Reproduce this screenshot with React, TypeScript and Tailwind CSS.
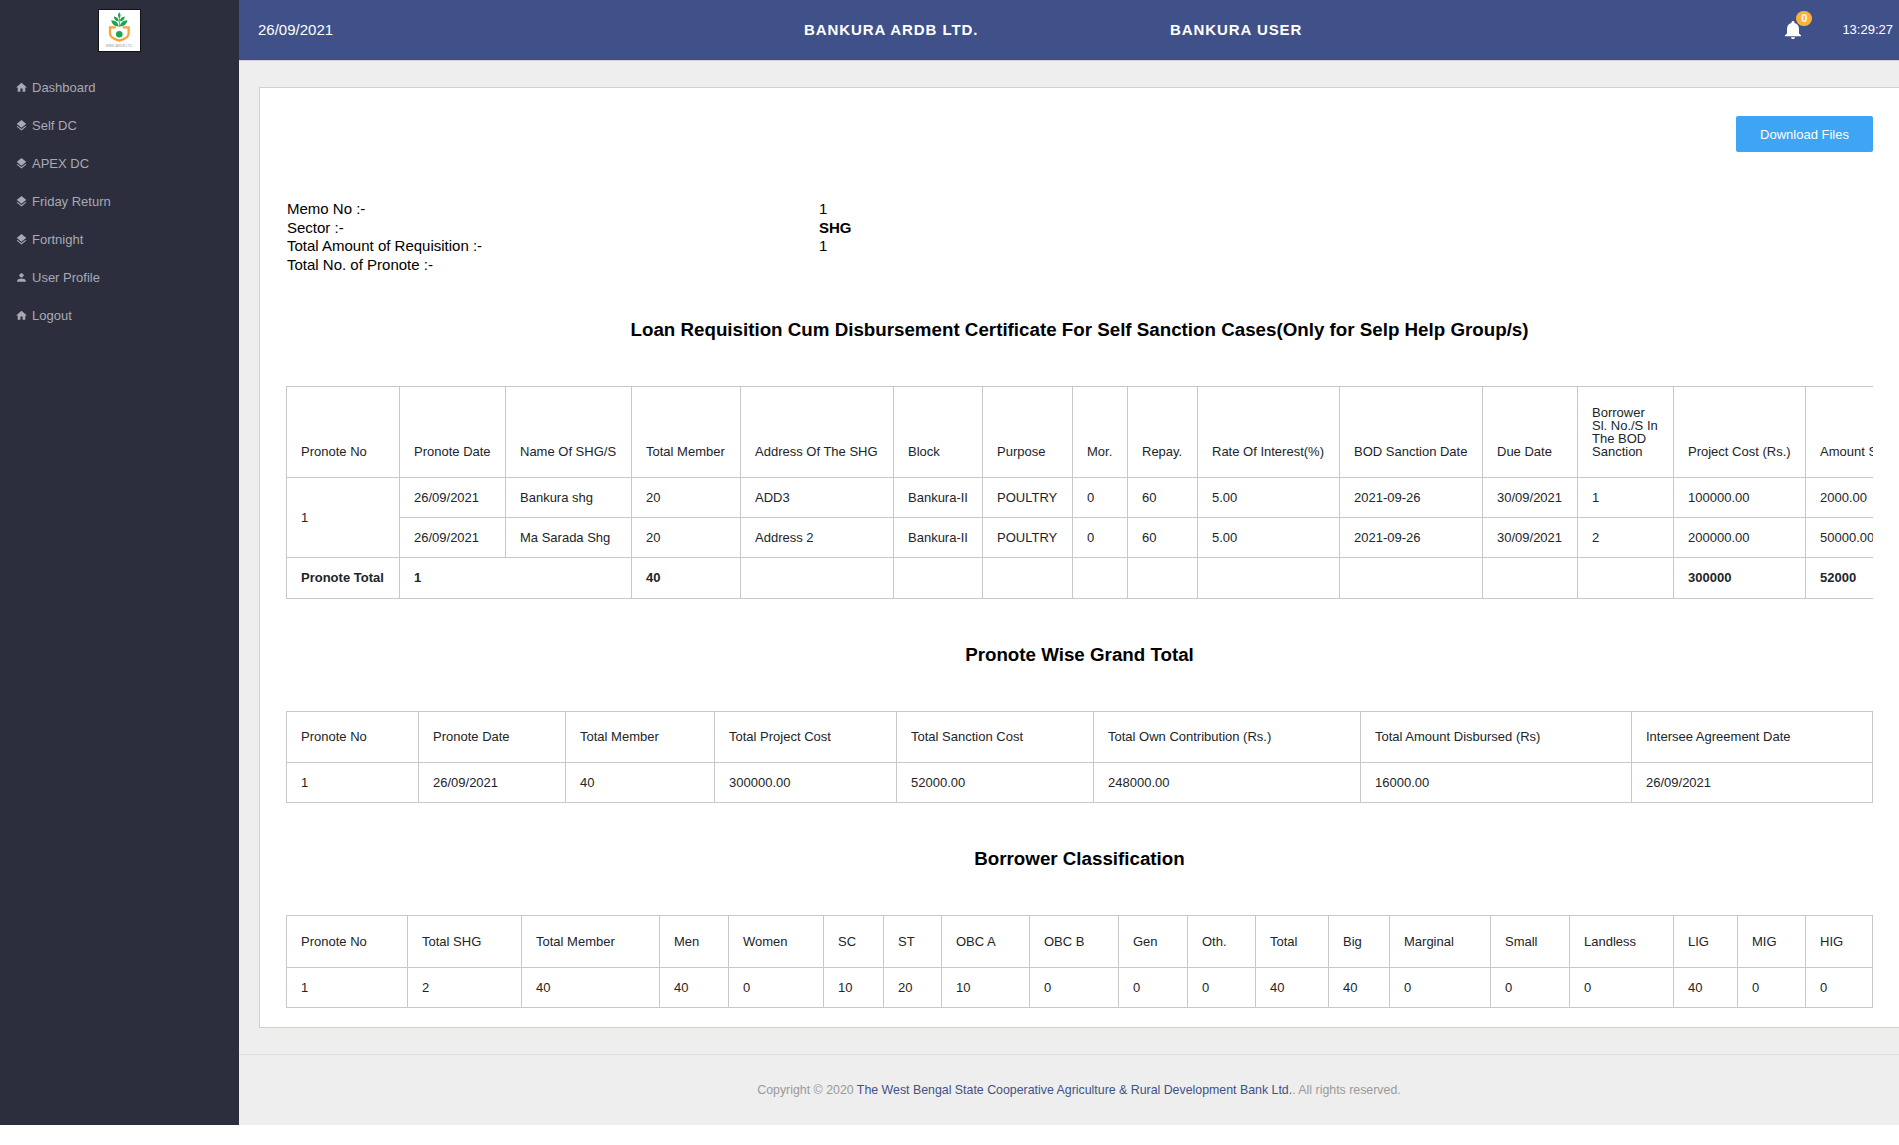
import React from "react";
import { MdHome, MdLayers, MdPerson } from "react-icons/md";

const nav = [
  { label: "Dashboard", icon: "home" },
  { label: "Self DC", icon: "layers" },
  { label: "APEX DC", icon: "layers" },
  { label: "Friday Return", icon: "layers" },
  { label: "Fortnight", icon: "layers" },
  { label: "User Profile", icon: "user" },
  { label: "Logout", icon: "home" },
];

const loanCols = [113, 106, 126, 109, 153, 89, 90, 55, 70, 142, 143, 95, 96, 132, 170];
const loanHead: React.ReactNode[] = [
  "Pronote No", "Pronote Date", "Name Of SHG/S", "Total Member", "Address Of The SHG", "Block", "Purpose", "Mor.", "Repay.",
  "Rate Of Interest(%)", "BOD Sanction Date", "Due Date",
  <>Borrower<br />Sl. No./S In<br />The BOD<br />Sanction</>,
  "Project Cost (Rs.)", "Amount Sanction (Rs.)",
];
const loanRows = [
  ["26/09/2021", "Bankura shg", "20", "ADD3", "Bankura-II", "POULTRY", "0", "60", "5.00", "2021-09-26", "30/09/2021", "1", "100000.00", "2000.00"],
  ["26/09/2021", "Ma Sarada Shg", "20", "Address 2", "Bankura-II", "POULTRY", "0", "60", "5.00", "2021-09-26", "30/09/2021", "2", "200000.00", "50000.00"],
];
const loanTotals = ["40", "", "", "", "", "", "", "", "", "", "300000", "52000"];

const grandCols = [132, 147, 149, 182, 197, 267, 271, 241];
const grandHead = ["Pronote No", "Pronote Date", "Total Member", "Total Project Cost", "Total Sanction Cost", "Total Own Contribution (Rs.)", "Total Amount Disbursed (Rs)", "Intersee Agreement Date"];
const grandRow = ["1", "26/09/2021", "40", "300000.00", "52000.00", "248000.00", "16000.00", "26/09/2021"];

const classCols = [121, 114, 138, 69, 95, 60, 58, 88, 89, 69, 68, 73, 61, 101, 79, 104, 64, 68, 67];
const classHead = ["Pronote No", "Total SHG", "Total Member", "Men", "Women", "SC", "ST", "OBC A", "OBC B", "Gen", "Oth.", "Total", "Big", "Marginal", "Small", "Landless", "LIG", "MIG", "HIG"];
const classRow = ["1", "2", "40", "40", "0", "10", "20", "10", "0", "0", "0", "40", "40", "0", "0", "0", "40", "0", "0"];

const cell = "border-r border-b border-[#c8c8c8] pl-[14px] text-left font-normal whitespace-nowrap";
const tableStyle = "table-fixed border-separate border-spacing-0 border-t border-l border-[#c8c8c8] text-[13px] leading-[13px] text-[#212529]";

function Cols({ widths }: { widths: number[] }) {
  return (
    <colgroup>
      {widths.map((w, i) => (
        <col key={i} style={{ width: w }} />
      ))}
    </colgroup>
  );
}

function Heading({ children }: { children: React.ReactNode }) {
  return <h3 className="flex h-28 items-center justify-center text-[18.75px] leading-6 font-bold text-black">{children}</h3>;
}

function SimpleTable({ widths, head, row, headClass }: { widths: number[]; head: string[]; row: string[]; headClass: string }) {
  return (
    <table className={tableStyle} style={{ width: widths.reduce((a, b) => a + b, 1) }}>
      <Cols widths={widths} />
      <thead>
        <tr className={headClass}>
          {head.map((h) => (
            <th key={h} className={cell + " pb-px"}>{h}</th>
          ))}
        </tr>
      </thead>
      <tbody>
        <tr className="h-10">
          {row.map((v, i) => (
            <td key={i} className={cell}>{v}</td>
          ))}
        </tr>
      </tbody>
    </table>
  );
}

function LoanTable() {
  return (
    <div className="overflow-hidden">
      <table className={tableStyle} style={{ width: loanCols.reduce((a, b) => a + b, 1) }}>
        <Cols widths={loanCols} />
        <thead>
          <tr className="h-[91px]">
            {loanHead.map((h, i) => (
              <th key={i} className={cell + " pb-[19px] align-bottom"}>{h}</th>
            ))}
          </tr>
        </thead>
        <tbody>
          {loanRows.map((r, ri) => (
            <tr key={ri} className="h-10">
              {ri === 0 && <td rowSpan={2} className={cell}>1</td>}
              {r.map((v, i) => (
                <td key={i} className={cell}>{v}</td>
              ))}
            </tr>
          ))}
          <tr className="h-[41px]">
            <td className={cell + " pb-px"}><b>Pronote Total</b></td>
            <td colSpan={2} className={cell + " pb-px"}><b>1</b></td>
            {loanTotals.map((v, i) => (
              <td key={i} className={cell + " pb-px"}><b>{v}</b></td>
            ))}
          </tr>
        </tbody>
      </table>
    </div>
  );
}

function Logo() {
  return (
    <svg width="43" height="43" viewBox="0 0 43 43">
      <rect width="43" height="43" fill="#111319" />
      <rect x="1" y="1" width="41" height="41" fill="#fff" />
      <g fill="#1aa64b">
        <path d="M21.3 3.2c1.6 2 1.8 3.8 0 6-1.800-2.200-1.600-4 0-6z" />
        <path d="M15.800 7.500c3 .2 4.700 1.800 4.900 4.800-3-.2-4.700-1.800-4.900-4.800zM26.800 7.500c-3 .2-4.700 1.800-4.900 4.800 3-.2 4.700-1.800 4.900-4.800z" />
        <path d="M13.300 11.300c4.300.2 7 2.500 7.400 6.200-4.300-.2-7-2.300-7.400-6.200zM29.300 11.300c-4.300.2-7 2.500-7.400 6.200 4.300-.2 7-2.300 7.400-6.200z" />
        <rect x="20.900" y="8" width=".8" height="10" />
        <circle cx="21.300" cy="25.300" r="3.300" />
      </g>
      <path d="M17.800 18.300H12v6.400c0 3 4.500 5.600 9.300 7 4.800-1.400 9.300-4 9.300-7v-6.400h-5.800" fill="none" stroke="#f9a03f" strokeWidth="2.300" />
      <text x="21.300" y="38" textAnchor="middle" textLength="27" fontSize="3.200" fill="#9a9a9a">WBSCARDB LTD.</text>
    </svg>
  );
}

function Bell() {
  return (
    <svg width="16" height="18" viewBox="4 2.500 16 19.500" preserveAspectRatio="none" fill="#fff">
      <path d="M12 22c1.100 0 2-.9 2-2h-4c0 1.100.89 2 2 2zm6-6v-5c0-3.070-1.640-5.640-4.500-6.320V4c0-.83-.67-1.500-1.500-1.500s-1.500.67-1.500 1.500v.68C7.630 5.360 6 7.920 6 11v5l-2 2v1h16v-1l-2-2z" />
    </svg>
  );
}

export default function App() {
  return (
    <div className="h-[1145px] w-full overflow-hidden bg-white font-['Liberation_Sans',Arial,sans-serif]">
      <div className="flex h-[1125px]">
        <aside className="w-[239px] shrink-0 bg-[#2c2e3e]">
          <div className="flex justify-center pt-[9px]">
            <Logo />
          </div>
          <nav className="mt-4">
            {nav.map((n) => (
              <a key={n.label} className="flex h-[38px] items-center pl-[15px] text-[13px] text-[#a9aab1]">
                <span className="flex w-[17px]">
                  {n.icon === "home" && <MdHome size={13} />}
                  {n.icon === "layers" && <MdLayers size={13} />}
                  {n.icon === "user" && <MdPerson size={13} />}
                </span>
                <span className="pt-px">{n.label}</span>
              </a>
            ))}
          </nav>
        </aside>

        <div className="flex min-w-0 flex-1 flex-col bg-[#eeeeee]">
          <header className="flex h-[61px] shrink-0 items-center border-b border-[#cfd0db] bg-[#405189] pr-[6px] pl-[19px] text-[15px] text-white">
            <span className="w-[546px]">26/09/2021</span>
            <span className="w-[366px] font-bold tracking-[0.93px]">BANKURA ARDB LTD.</span>
            <span className="font-bold tracking-[0.93px]">BANKURA USER</span>
            <div className="relative ml-auto">
              <Bell />
              <span className="absolute -top-[10px] left-[11px] flex h-[15px] w-4 items-center justify-center rounded-full bg-[#ffb137] text-[11px] leading-none font-bold">0</span>
            </div>
            <span className="ml-[41px] text-[13px]">13:29:27</span>
          </header>

          <main className="mt-[26px] ml-5 h-[941px] shrink-0 border border-r-0 border-[#cfd0db] bg-white pt-7 pr-[26px] pl-[26px]">
            <div className="flex justify-end">
              <button className="h-9 w-[137px] rounded-[2px] bg-[#3da5f4] pt-px text-[13px] text-white">Download Files</button>
            </div>

            <dl className="mt-12 grid h-[74px] grid-cols-[532px_1fr] auto-rows-[18.6px] content-start pl-px text-[15px] leading-[18.6px] text-black">
              <dt>Memo No :-</dt>
              <dd>1</dd>
              <dt>Sector :-</dt>
              <dd className="font-bold">SHG</dd>
              <dt>Total Amount of Requisition :-</dt>
              <dd>1</dd>
              <dt>Total No. of Pronote :-</dt>
              <dd />
            </dl>

            <Heading>Loan Requisition Cum Disbursement Certificate For Self Sanction Cases(Only for Selp Help Group/s)</Heading>
            <LoanTable />
            <Heading>Pronote Wise Grand Total</Heading>
            <SimpleTable widths={grandCols} head={grandHead} row={grandRow} headClass="h-[51px]" />
            <Heading>Borrower Classification</Heading>
            <SimpleTable widths={classCols} head={classHead} row={classRow} headClass="h-[52px]" />
          </main>

          <footer className="mt-[26px] flex flex-1 items-center justify-center border-t border-[#dedede] pl-5 text-[12.36px] text-[#9a9a9a]">
            <p className="whitespace-nowrap">
              Copyright © 2020 <a className="text-[#405189]">The West Bengal State Cooperative Agriculture &amp; Rural Development Bank Ltd.</a>. All rights reserved.
            </p>
          </footer>
        </div>
      </div>
    </div>
  );
}
